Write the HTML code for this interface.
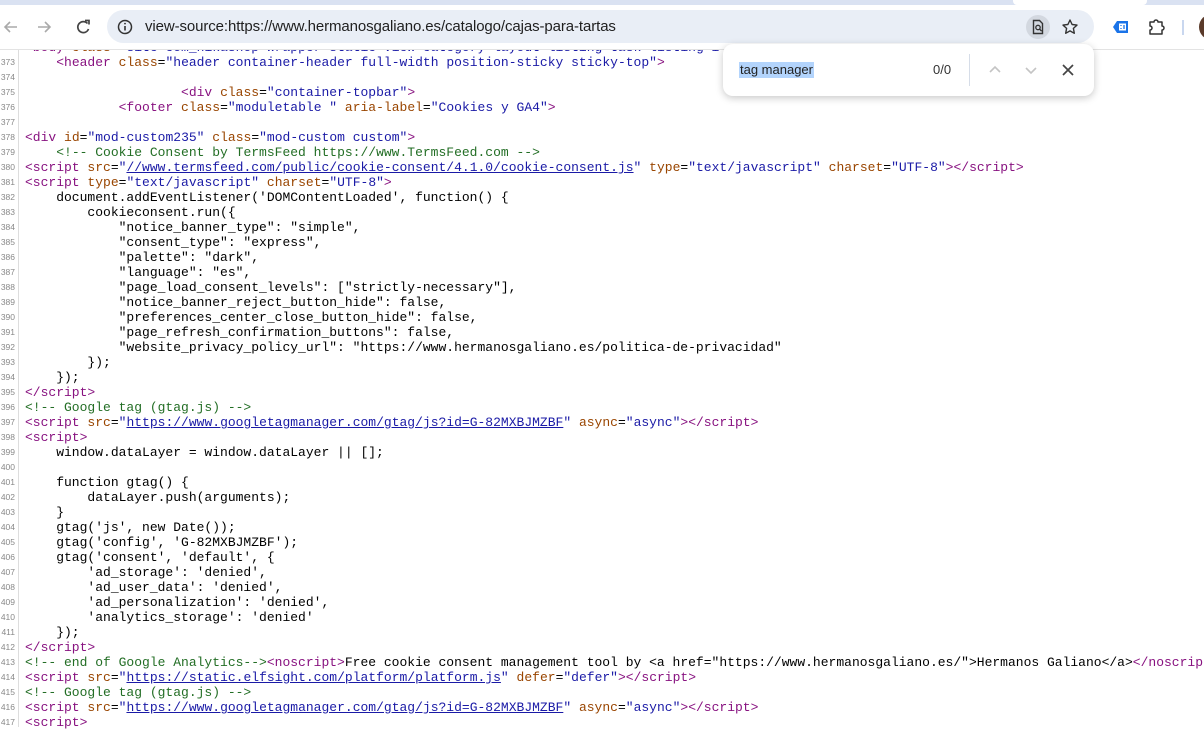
<!DOCTYPE html>
<html><head><meta charset="utf-8">
<style>
*{margin:0;padding:0;box-sizing:border-box}
body{width:1204px;height:727px;overflow:hidden;background:#fff;position:relative;font-family:"Liberation Sans",sans-serif}
#strip{position:absolute;left:0;top:0;width:1204px;height:5px;background:#dae2f2}
#strip .w2{position:absolute;top:0;left:1013px;width:134px;height:5px;background:#fff;border-radius:0 0 4px 4px}
#tb{position:absolute;left:0;top:5px;width:1204px;height:45px;background:#fff;border-bottom:1px solid #e3e3e3}
#omni{position:absolute;left:107px;top:10px;width:987px;height:33px;background:#e9eef6;border-radius:17px}
#url{position:absolute;left:145px;top:18px;font-size:15px;color:#1f1f1f;letter-spacing:-0.1px}
#code{position:absolute;left:0;top:0;width:1204px;height:727px;font-family:"Liberation Mono",monospace;font-size:13px;color:#000}
.l{position:absolute;left:25px;white-space:pre;height:15px;line-height:15px}
.n{position:absolute;left:0;width:15px;text-align:right;font-family:"Liberation Sans",sans-serif;font-size:8.5px;color:#888;line-height:15px}
#gut{position:absolute;left:18px;top:50px;width:1px;height:677px;background:#ddd}
.t{color:#881280}.a{color:#994500}.v{color:#1a1aa6}.c{color:#236e25}.u{color:#1a1aa6;text-decoration:underline}
#find{position:absolute;left:723px;top:44px;width:371px;height:52px;background:#fff;border-radius:10px;box-shadow:0 2px 8px rgba(0,0,0,.22)}
</style></head><body>
<div id="code">
<div id="gut"></div>
<div class="n" style="top:40px">372</div><div class="l" style="top:40px"><span class="t">&lt;body</span> <span class="a">class</span>="<span class="v">site com_hikashop wrapper-static view-category layout-listing task-listing i</span></div>
<div class="n" style="top:55px">373</div><div class="l" style="top:55px">    <span class="t">&lt;header</span> <span class="a">class</span>=<span class="v">"header container-header full-width position-sticky sticky-top"</span><span class="t">&gt;</span></div>
<div class="n" style="top:70px">374</div>
<div class="n" style="top:85px">375</div><div class="l" style="top:85px">                    <span class="t">&lt;div</span> <span class="a">class</span>=<span class="v">"container-topbar"</span><span class="t">&gt;</span></div>
<div class="n" style="top:100px">376</div><div class="l" style="top:100px">            <span class="t">&lt;footer</span> <span class="a">class</span>=<span class="v">"moduletable "</span> <span class="a">aria-label</span>=<span class="v">"Cookies y GA4"</span><span class="t">&gt;</span></div>
<div class="n" style="top:115px">377</div>
<div class="n" style="top:130px">378</div><div class="l" style="top:130px"><span class="t">&lt;div</span> <span class="a">id</span>=<span class="v">"mod-custom235"</span> <span class="a">class</span>=<span class="v">"mod-custom custom"</span><span class="t">&gt;</span></div>
<div class="n" style="top:145px">379</div><div class="l" style="top:145px">    <span class="c">&lt;!-- Cookie Consent by TermsFeed https://www.TermsFeed.com --&gt;</span></div>
<div class="n" style="top:160px">380</div><div class="l" style="top:160px"><span class="t">&lt;script</span> <span class="a">src</span>=<span class="v">"</span><span class="u">//www.termsfeed.com/public/cookie-consent/4.1.0/cookie-consent.js</span><span class="v">"</span> <span class="a">type</span>=<span class="v">"text/javascript"</span> <span class="a">charset</span>=<span class="v">"UTF-8"</span><span class="t">&gt;&lt;/script&gt;</span></div>
<div class="n" style="top:175px">381</div><div class="l" style="top:175px"><span class="t">&lt;script</span> <span class="a">type</span>=<span class="v">"text/javascript"</span> <span class="a">charset</span>=<span class="v">"UTF-8"</span><span class="t">&gt;</span></div>
<div class="n" style="top:190px">382</div><div class="l" style="top:190px">    document.addEventListener('DOMContentLoaded', function() {</div>
<div class="n" style="top:205px">383</div><div class="l" style="top:205px">        cookieconsent.run({</div>
<div class="n" style="top:220px">384</div><div class="l" style="top:220px">            "notice_banner_type": "simple",</div>
<div class="n" style="top:235px">385</div><div class="l" style="top:235px">            "consent_type": "express",</div>
<div class="n" style="top:250px">386</div><div class="l" style="top:250px">            "palette": "dark",</div>
<div class="n" style="top:265px">387</div><div class="l" style="top:265px">            "language": "es",</div>
<div class="n" style="top:280px">388</div><div class="l" style="top:280px">            "page_load_consent_levels": ["strictly-necessary"],</div>
<div class="n" style="top:295px">389</div><div class="l" style="top:295px">            "notice_banner_reject_button_hide": false,</div>
<div class="n" style="top:310px">390</div><div class="l" style="top:310px">            "preferences_center_close_button_hide": false,</div>
<div class="n" style="top:325px">391</div><div class="l" style="top:325px">            "page_refresh_confirmation_buttons": false,</div>
<div class="n" style="top:340px">392</div><div class="l" style="top:340px">            "website_privacy_policy_url": "https://www.hermanosgaliano.es/politica-de-privacidad"</div>
<div class="n" style="top:355px">393</div><div class="l" style="top:355px">        });</div>
<div class="n" style="top:370px">394</div><div class="l" style="top:370px">    });</div>
<div class="n" style="top:385px">395</div><div class="l" style="top:385px"><span class="t">&lt;/script&gt;</span></div>
<div class="n" style="top:400px">396</div><div class="l" style="top:400px"><span class="c">&lt;!-- Google tag (gtag.js) --&gt;</span></div>
<div class="n" style="top:415px">397</div><div class="l" style="top:415px"><span class="t">&lt;script</span> <span class="a">src</span>=<span class="v">"</span><span class="u">https://www.googletagmanager.com/gtag/js?id=G-82MXBJMZBF</span><span class="v">"</span> <span class="a">async</span>=<span class="v">"async"</span><span class="t">&gt;&lt;/script&gt;</span></div>
<div class="n" style="top:430px">398</div><div class="l" style="top:430px"><span class="t">&lt;script&gt;</span></div>
<div class="n" style="top:445px">399</div><div class="l" style="top:445px">    window.dataLayer = window.dataLayer || [];</div>
<div class="n" style="top:460px">400</div>
<div class="n" style="top:475px">401</div><div class="l" style="top:475px">    function gtag() {</div>
<div class="n" style="top:490px">402</div><div class="l" style="top:490px">        dataLayer.push(arguments);</div>
<div class="n" style="top:505px">403</div><div class="l" style="top:505px">    }</div>
<div class="n" style="top:520px">404</div><div class="l" style="top:520px">    gtag('js', new Date());</div>
<div class="n" style="top:535px">405</div><div class="l" style="top:535px">    gtag('config', 'G-82MXBJMZBF');</div>
<div class="n" style="top:550px">406</div><div class="l" style="top:550px">    gtag('consent', 'default', {</div>
<div class="n" style="top:565px">407</div><div class="l" style="top:565px">        'ad_storage': 'denied',</div>
<div class="n" style="top:580px">408</div><div class="l" style="top:580px">        'ad_user_data': 'denied',</div>
<div class="n" style="top:595px">409</div><div class="l" style="top:595px">        'ad_personalization': 'denied',</div>
<div class="n" style="top:610px">410</div><div class="l" style="top:610px">        'analytics_storage': 'denied'</div>
<div class="n" style="top:625px">411</div><div class="l" style="top:625px">    });</div>
<div class="n" style="top:640px">412</div><div class="l" style="top:640px"><span class="t">&lt;/script&gt;</span></div>
<div class="n" style="top:655px">413</div><div class="l" style="top:655px"><span class="c">&lt;!-- end of Google Analytics--&gt;</span><span class="t">&lt;noscript&gt;</span>Free cookie consent management tool by &lt;a href="https://www.hermanosgaliano.es/"&gt;Hermanos Galiano&lt;/a&gt;<span class="t">&lt;/noscript&gt;</span></div>
<div class="n" style="top:670px">414</div><div class="l" style="top:670px"><span class="t">&lt;script</span> <span class="a">src</span>=<span class="v">"</span><span class="u">https://static.elfsight.com/platform/platform.js</span><span class="v">"</span> <span class="a">defer</span>=<span class="v">"defer"</span><span class="t">&gt;&lt;/script&gt;</span></div>
<div class="n" style="top:685px">415</div><div class="l" style="top:685px"><span class="c">&lt;!-- Google tag (gtag.js) --&gt;</span></div>
<div class="n" style="top:700px">416</div><div class="l" style="top:700px"><span class="t">&lt;script</span> <span class="a">src</span>=<span class="v">"</span><span class="u">https://www.googletagmanager.com/gtag/js?id=G-82MXBJMZBF</span><span class="v">"</span> <span class="a">async</span>=<span class="v">"async"</span><span class="t">&gt;&lt;/script&gt;</span></div>
<div class="n" style="top:715px">417</div><div class="l" style="top:715px"><span class="t">&lt;script&gt;</span></div>
</div>

<div id="strip"><div class="w2"></div></div>
<div id="tb"></div>
<div id="omni"></div>
<svg style="position:absolute;left:0;top:14px" width="100" height="26" viewBox="0 0 100 26">
 <path d="M17 13H5M10 8l-5 5 5 5" stroke="#aaa" stroke-width="1.6" fill="none"/>
 <path d="M38 13h12M45 8l5 5-5 5" stroke="#aaa" stroke-width="1.6" fill="none"/>
 <path d="M87.5 9.5A5.5 5.5 0 1 0 88.5 15" stroke="#444" stroke-width="1.7" fill="none"/>
 <path d="M85 6.5h4v4" stroke="#444" stroke-width="1.7" fill="none"/>
</svg>
<svg style="position:absolute;left:116px;top:18px" width="18" height="18" viewBox="0 0 18 18"><circle cx="9" cy="9" r="6.5" stroke="#333" stroke-width="1.5" fill="none"/><path d="M9 8v4.5" stroke="#333" stroke-width="1.6"/><circle cx="9" cy="5.6" r="0.9" fill="#333"/></svg>
<div id="url">view-source:https://www.hermanosgaliano.es/catalogo/cajas-para-tartas</div>
<div style="position:absolute;left:1026px;top:15px;width:24px;height:24px;border-radius:12px;background:#d3d8e0"></div>
<svg style="position:absolute;left:1030px;top:19px" width="16" height="16" viewBox="0 0 16 16"><path d="M3.5 1.5h6l3 3v10h-9z" stroke="#333" stroke-width="1.4" fill="none"/><circle cx="8" cy="8.5" r="2.2" stroke="#333" stroke-width="1.3" fill="none"/><path d="M9.6 10.1l2 2" stroke="#333" stroke-width="1.4"/></svg>
<svg style="position:absolute;left:1061px;top:18px" width="18" height="18" viewBox="0 0 18 18"><path d="M9 2l2.1 4.5 4.9.6-3.6 3.3.9 4.9L9 12.9l-4.3 2.4.9-4.9L2 7.1l4.9-.6z" stroke="#333" stroke-width="1.4" fill="none" stroke-linejoin="round"/></svg>
<svg style="position:absolute;left:1111px;top:18px" width="20" height="18" viewBox="0 0 20 18"><path d="M6 3h11v12H6L2 9z" fill="#1a73e8"/><rect x="8" y="5.5" width="7" height="7" fill="#fff"/><path d="M10 7v1M10 10v1M13 7v4" stroke="#1a73e8" stroke-width="1.3"/></svg>
<svg style="position:absolute;left:1147px;top:17px" width="20" height="20" viewBox="0 0 20 20"><path d="M3 5h4a2 2 0 0 1 4 0h4v4a2 2 0 0 1 0 4v4H3v-4a2 2 0 0 0 0-4z" stroke="#333" stroke-width="1.5" fill="none" stroke-linejoin="round"/></svg>
<div style="position:absolute;left:1182px;top:20px;width:2px;height:15px;background:#c9d7ef"></div>
<div style="position:absolute;left:1199px;top:14px;width:26px;height:26px;border-radius:13px;background:#5a3a2a"></div>

<div id="find">
 <div style="position:absolute;left:16px;top:18px;height:16px;background:#b3d4fc;font-size:13px;line-height:16px;color:#222;padding:0 1px">tag manager</div>
 <div style="position:absolute;left:210px;top:18px;font-size:13px;line-height:16px;color:#333">0/0</div>
 <div style="position:absolute;left:246px;top:10px;width:1px;height:32px;background:#d6dde8"></div>
 <svg style="position:absolute;left:264px;top:18px" width="16" height="16" viewBox="0 0 16 16"><path d="M3 10l5-5 5 5" stroke="#c4c4c4" stroke-width="1.6" fill="none"/></svg>
 <svg style="position:absolute;left:300px;top:18px" width="16" height="16" viewBox="0 0 16 16"><path d="M3 6l5 5 5-5" stroke="#c4c4c4" stroke-width="1.6" fill="none"/></svg>
 <svg style="position:absolute;left:337px;top:18px" width="16" height="16" viewBox="0 0 16 16"><path d="M3 3l10 10M13 3L3 13" stroke="#444" stroke-width="1.7"/></svg>
</div>
</body></html>
